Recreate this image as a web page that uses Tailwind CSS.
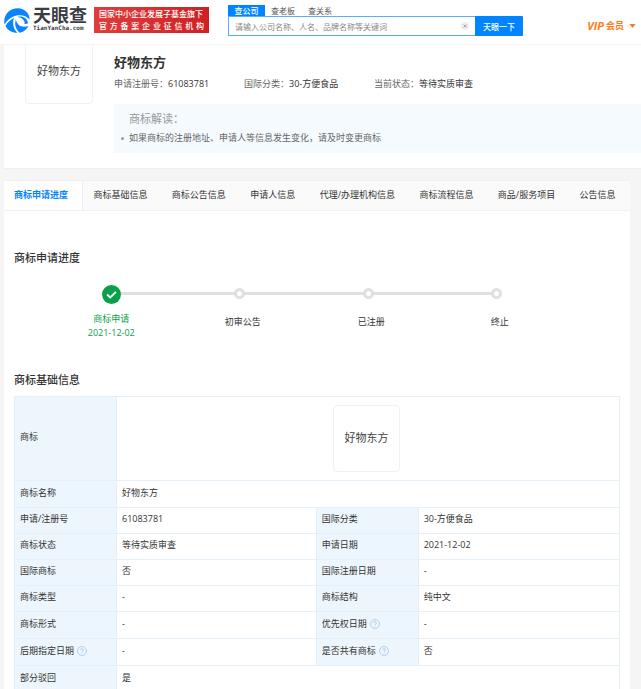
<!DOCTYPE html>
<html lang="zh-CN">

<head>
  <meta charset="UTF-8">
  <meta name="viewport" content="width=device-width, initial-scale=1.0">
  <title>好物东方 - 天眼查</title>
  <script src="https://cdn.jsdelivr.net/npm/@tailwindcss/browser@4"></script>
</head>

<body class="min-h-screen flex flex-col overflow-x-hidden bg-[#f5f5f5] text-[9px] leading-[14px] text-[#333] font-['Open_Sans','Noto_Sans_CJK_SC',sans-serif]">
  <!-- Header -->
  <header class="relative z-10 flex items-start h-[45px] pl-1 pr-[5px] bg-white border-b border-[#f3f3f3]">
    <a href="#" class="w-[86px] flex items-center pt-[7px]">
      <svg class="shrink-0 w-[26px] h-[26px]" viewBox="0 0 26 26" fill="#0a84ff">
        <path d="M4 5C9 0 19 -0.500 23.500 6C25 8 25.500 10 25.500 12.500C23 9.500 19 8 14.500 8.300C8.500 8.800 3.500 12.500 0.500 17.500C-0.500 12.500 1 8 4 5Z" />
        <path d="M10 11C6.500 12.800 3.500 15.500 1.500 19C3.500 23.500 8.500 26 13.500 25.800C9.500 22 8 16.500 10 11Z" />
        <path d="M12 12.500C13 18.500 17.500 21 24.500 19C22.500 22.500 19.500 25 15.500 25.800C11.500 22 10.200 17 12 12.500Z" />
        <path d="M13.500 10C18 8.500 23 10.500 24 16C23.200 16.800 21.800 17.200 20.500 17C21.500 13.500 18 10.500 13.500 10Z" />
      </svg>
      <span class="ml-[3px] flex flex-col text-[#3c3c44] font-bold whitespace-nowrap">
        <span class="text-[18px] leading-[16px]">天眼查</span>
        <span class="text-[6px] leading-[10px] font-['DejaVu_Sans_Mono',monospace]">TianYanCha.com</span>
      </span>
    </a>
    <div class="ml-1 mt-[7px] w-[115px] h-[26px] py-px px-[5px] text-[8px] leading-[12px] font-medium text-white bg-linear-to-r from-[#df3c3c] to-[#cf1f22] whitespace-nowrap">
      <div>国家中小企业发展子基金旗下</div>
      <div class="[text-align-last:justify]">官方备案企业征信机构</div>
    </div>
    <form class="ml-[19px] pt-[5px] w-[295px] text-[8px] leading-[11px]">
      <div class="flex text-[#555]">
        <button type="button" class="w-[37px] bg-[#0084ff] text-white font-medium">查公司</button>
        <button type="button" class="ml-[6px]">查老板</button>
        <button type="button" class="ml-[13px]">查关系</button>
      </div>
      <div class="flex h-5">
        <div class="flex flex-1 items-center border border-r-0 border-[#57adff] bg-white">
          <input type="text" aria-label="搜索" placeholder="请输入公司名称、人名、品牌名称等关键词" class="flex-1 min-w-0 pl-[6px] outline-none placeholder-[#888]">
          <button type="button" aria-label="清除" class="mr-[6px] w-2 h-2 rounded-full bg-[#eee] flex items-center justify-center">
            <svg class="w-1 h-1" viewBox="0 0 4 4" stroke="#888" stroke-width="0.700"><path d="M0.500 0.500L3.500 3.500M3.500 0.500L0.500 3.500" /></svg>
          </button>
        </div>
        <button type="submit" class="w-12 rounded-r-[1px] bg-[#0084ff] text-white font-medium">天眼一下</button>
      </div>
    </form>
    <a href="#" class="ml-auto mt-[19px] flex items-center text-[#ff7a1c] font-bold whitespace-nowrap">
      <span class="text-[11px] italic">VIP</span>
      <span class="ml-[2px]">会员</span>
      <svg class="ml-[5px] w-[7px] h-1" viewBox="0 0 7 4" fill="currentColor"><path d="M0.500 0H6.500L3.500 4Z" /></svg>
    </a>
  </header>

  <main class="flex-1 flex flex-col pl-1">
    <!-- Trademark summary -->
    <section class="-mt-2 h-[132px] pl-[21px] flex bg-white border-b border-[#eee]">
      <div class="shrink-0 w-[68px] h-[67px] flex items-center justify-center border border-[#f0f0f0] rounded text-[11px] text-[#444] font-['Liberation_Serif','Noto_Sans_CJK_SC',serif]">好物东方</div>
      <div class="ml-[21px] flex-1 pt-[15px]">
        <h1 class="text-[13px] leading-5 font-bold">好物东方</h1>
        <div class="mt-[5px] grid grid-cols-[130px_130px_1fr] whitespace-nowrap">
          <div><span class="text-[#666]">申请注册号：</span>61083781</div>
          <div><span class="text-[#666]">国际分类：</span>30-方便食品</div>
          <div><span class="text-[#666]">当前状态：</span>等待实质审查</div>
        </div>
        <div class="mt-[13px] h-[49px] pt-[7px] pl-[15px] bg-[#f5faff]">
          <h2 class="text-[11px] leading-4 text-[#999]">商标解读：</h2>
          <ul class="mt-1 text-[#666]">
            <li class="relative before:absolute before:-left-2 before:top-[6px] before:size-[3px] before:rounded-full before:bg-[#999]">如果商标的注册地址、申请人等信息发生变化，请及时变更商标</li>
          </ul>
        </div>
      </div>
    </section>

    <section class="mt-[11px] mr-[11px] flex-1 bg-white">
      <!-- Tab Navigation -->
      <nav class="flex h-[31px] bg-[#fafafa] border-t border-b border-[#f0f0f0] leading-[27px] whitespace-nowrap">
        <a href="#progress" class="flex-auto px-[10px] bg-white border-r border-[#eee] text-[#0084ff] font-bold">商标申请进度</a>
        <a href="#basic" class="flex-auto px-[10px]">商标基础信息</a>
        <a href="#" class="flex-auto px-[10px]">商标公告信息</a>
        <a href="#" class="flex-auto px-[10px]">申请人信息</a>
        <a href="#" class="flex-auto px-[10px]">代理/办理机构信息</a>
        <a href="#" class="flex-auto px-[10px]">商标流程信息</a>
        <a href="#" class="flex-auto px-[10px]">商品/服务项目</a>
        <a href="#" class="flex-auto px-[10px]">公告信息</a>
      </nav>

      <!-- Progress -->
      <h2 id="progress" class="mt-[39px] ml-[10px] text-[11px] leading-4 font-medium">商标申请进度</h2>
      <ol class="mt-[19px] pl-[43px] pr-[69px] grid grid-cols-4 text-center">
        <li class="relative after:absolute after:left-1/2 after:top-[7px] after:w-full after:h-[3px] after:bg-[#e0e0e0]">
          <svg class="relative z-1 mx-auto w-[19px] h-[19px]" viewBox="0 0 19 19" fill="none">
            <circle cx="9.500" cy="9.500" r="9.500" fill="#0a9f4b" />
            <path d="M5 9.500L8.300 12.500L14 6.800" stroke="#fff" stroke-width="1.800" />
          </svg>
          <div class="mt-2 text-[#0aa04e]">商标申请<br>2021-12-02</div>
        </li>
        <li class="relative after:absolute after:left-1/2 after:top-[7px] after:w-full after:h-[3px] after:bg-[#e0e0e0]">
          <span class="relative z-1 block mx-auto mt-[3px] size-[11px] rounded-full border-3 border-[#e0e0e0] bg-white"></span>
          <div class="mt-4 pl-[6px]">初审公告</div>
        </li>
        <li class="relative after:absolute after:left-1/2 after:top-[7px] after:w-full after:h-[3px] after:bg-[#e0e0e0]">
          <span class="relative z-1 block mx-auto mt-[3px] size-[11px] rounded-full border-3 border-[#e0e0e0] bg-white"></span>
          <div class="mt-4 pl-[6px]">已注册</div>
        </li>
        <li>
          <span class="relative z-1 block mx-auto mt-[3px] size-[11px] rounded-full border-3 border-[#e0e0e0] bg-white"></span>
          <div class="mt-4 pl-[6px]">终止</div>
        </li>
      </ol>

      <!-- Basic info -->
      <h2 id="basic" class="mt-8 ml-[10px] text-[11px] leading-4 font-medium">商标基础信息</h2>
      <div class="mt-2 pl-[10px] pr-[10px]">
        <table class="w-full table-fixed border-collapse text-left [&_th]:bg-[#eef6fd] [&_th]:font-normal [&_th]:pl-[5px] [&_td]:pl-[5px] [&_th]:pb-[3px] [&_td]:pb-[3px] [&_th]:border [&_td]:border [&_th]:border-[#e3eff9] [&_td]:border-[#e3eff9] [&_tr:last-child>*]:border-b-0 [&_tr:last-child>*]:pb-0">
          <colgroup>
            <col class="w-[102px]">
            <col class="w-[33%]">
            <col class="w-[102px]">
            <col>
          </colgroup>
          <tbody>
            <tr class="h-[84px]">
              <th>商标</th>
              <td colspan="3" class="pr-2">
                <div class="mx-auto mt-[2px] w-[67px] h-[67px] flex items-center justify-center border border-[#f0f0f0] rounded text-[11px] text-[#444] font-['Liberation_Serif','Noto_Sans_CJK_SC',serif]">好物东方</div>
              </td>
            </tr>
            <tr class="h-[27px]"><th>商标名称</th><td colspan="3">好物东方</td></tr>
            <tr class="h-[26px]"><th>申请/注册号</th><td>61083781</td><th>国际分类</th><td>30-方便食品</td></tr>
            <tr class="h-[26px]"><th>商标状态</th><td>等待实质审查</td><th>申请日期</th><td>2021-12-02</td></tr>
            <tr class="h-[26px]"><th>国际商标</th><td>否</td><th>国际注册日期</th><td>-</td></tr>
            <tr class="h-[26px]"><th>商标类型</th><td>-</td><th>商标结构</th><td>纯中文</td></tr>
            <tr class="h-[27px]">
              <th>商标形式</th>
              <td>-</td>
              <th>
                <div class="flex items-center gap-[3px]">优先权日期
                  <svg class="w-[10px] h-[10px]" viewBox="0 0 10 10" fill="none" stroke="#a9cdec" stroke-width="0.900"><circle cx="5" cy="5" r="4.500" /><path d="M3.600 4C3.600 2.100 6.400 2.100 6.400 4C6.400 5 5 4.900 5 6M5 6.800V7.700" /></svg>
                </div>
              </th>
              <td>-</td>
            </tr>
            <tr class="h-[27px]">
              <th>
                <div class="flex items-center gap-[3px]">后期指定日期
                  <svg class="w-[10px] h-[10px]" viewBox="0 0 10 10" fill="none" stroke="#a9cdec" stroke-width="0.900"><circle cx="5" cy="5" r="4.500" /><path d="M3.600 4C3.600 2.100 6.400 2.100 6.400 4C6.400 5 5 4.900 5 6M5 6.800V7.700" /></svg>
                </div>
              </th>
              <td>-</td>
              <th>
                <div class="flex items-center gap-[3px]">是否共有商标
                  <svg class="w-[10px] h-[10px]" viewBox="0 0 10 10" fill="none" stroke="#a9cdec" stroke-width="0.900"><circle cx="5" cy="5" r="4.500" /><path d="M3.600 4C3.600 2.100 6.400 2.100 6.400 4C6.400 5 5 4.900 5 6M5 6.800V7.700" /></svg>
                </div>
              </th>
              <td>否</td>
            </tr>
            <tr class="h-6"><th>部分驳回</th><td colspan="3">是</td></tr>
          </tbody>
        </table>
      </div>
    </section>
  </main>
</body>

</html>
